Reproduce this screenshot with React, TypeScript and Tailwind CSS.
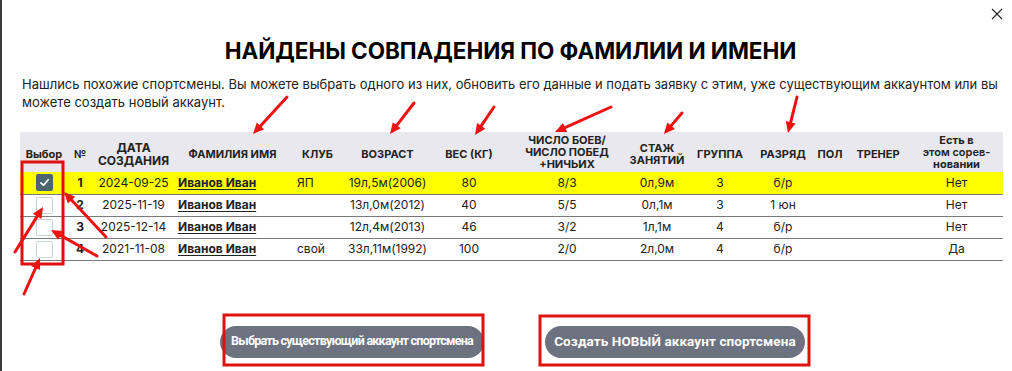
import React from 'react'

const rows = [
  { n: 1, date: '2024-09-25', name: 'Иванов Иван', club: 'ЯП', age: '19л,5м(2006)', weight: '80', fights: '8/3', exp: '0л,9м', group: '3', rank: 'б/р', here: 'Нет', checked: true },
  { n: 2, date: '2025-11-19', name: 'Иванов Иван', club: '', age: '13л,0м(2012)', weight: '40', fights: '5/5', exp: '0л,1м', group: '3', rank: '1 юн', here: 'Нет', checked: false },
  { n: 3, date: '2025-12-14', name: 'Иванов Иван', club: '', age: '12л,4м(2013)', weight: '46', fights: '3/2', exp: '1л,1м', group: '4', rank: 'б/р', here: 'Нет', checked: false },
  { n: 4, date: '2021-11-08', name: 'Иванов Иван', club: 'свой', age: '33л,11м(1992)', weight: '100', fights: '2/0', exp: '2л,0м', group: '4', rank: 'б/р', here: 'Да', checked: false },
]

const widths = [48, 24, 83, 115, 55, 85, 78, 118, 62, 64, 62, 32, 64, 93]

// [x1, y1, x2, y2] — arrow points at x2,y2
const arrows: [number, number, number, number][] = [
  [287, 97, 253, 134],
  [414, 103, 390, 134],
  [494, 107, 475, 135],
  [611, 107, 555, 132],
  [682, 113, 664, 134],
  [797, 97, 788, 133],
  [106, 237, 64, 192],
  [15, 252, 43, 207],
  [97, 256, 51, 230],
  [24, 294, 40, 258],
]

function Arrow({ a }: { a: [number, number, number, number] }) {
  const [x1, y1, x2, y2] = a
  const dx = x2 - x1
  const dy = y2 - y1
  const len = Math.hypot(dx, dy)
  const ux = dx / len
  const uy = dy / len
  const hl = 11
  const hw = 5
  const bx = x2 - ux * hl
  const by = y2 - uy * hl
  const pts = `${x2},${y2} ${bx - uy * hw},${by + ux * hw} ${bx + uy * hw},${by - ux * hw}`
  return (
    <g>
      <line x1={x1} y1={y1} x2={bx} y2={by} stroke="#ee1111" strokeWidth={3} strokeLinecap="round" />
      <polygon points={pts} fill="#ee1111" />
    </g>
  )
}

function Checkbox({ checked }: { checked: boolean }) {
  if (checked) {
    return (
      <div className="mx-auto flex h-[17px] w-[17px] items-center justify-center rounded-[2px] bg-[#4b6670]">
        <svg width="11" height="11" viewBox="0 0 12 12">
          <path d="M2 6.5 L5 9 L10 3" fill="none" stroke="white" strokeWidth="1.8" strokeLinecap="round" strokeLinejoin="round" />
        </svg>
      </div>
    )
  }
  return <div className="mx-auto h-[17px] w-[17px] rounded-[2px] border border-[#c9d5dd] bg-white" />
}

export default function App() {
  return (
    <div className="relative h-[371px] w-[1012px] overflow-hidden border-l-2 border-[#3a3a3a] bg-white text-[#111]" style={{ fontFamily: 'Inter, "Noto Sans", sans-serif' }}>
      <button className="absolute right-[9px] top-[8px] text-[#222]">
        <svg width="12" height="12" viewBox="0 0 12 12">
          <path d="M1 1 L11 11 M11 1 L1 11" stroke="#222" strokeWidth="1.1" />
        </svg>
      </button>

      <h1 className="pl-[7px] pt-[38px] text-center text-[22.5px] font-bold leading-[26px] tracking-[-0.05px] text-black">
        НАЙДЕНЫ СОВПАДЕНИЯ ПО ФАМИЛИИ И ИМЕНИ
      </h1>

      <p className="mt-[11px] pl-[20px] pr-[2px] text-[13px] leading-[18px] text-[#222]">
        Нашлись похожие спортсмены. Вы можете выбрать одного из них, обновить его данные и подать заявку с этим, уже существующим аккаунтом или вы можете создать новый аккаунт.
      </p>

      <table className="ml-[18px] mt-[21px] table-fixed border-collapse" style={{ width: 983 }}>
        <colgroup>
          {widths.map((w, i) => <col key={i} style={{ width: w }} />)}
        </colgroup>
        <thead>
          <tr className="h-[40px] bg-[#e8e8ee] text-[11px] font-bold leading-[12px] text-[#222]">
            <th className="pt-[3px] text-center">Выбор</th>
            <th className="pt-[3px] text-center">№</th>
            <th className="pt-[3px] text-center text-[12px] leading-[13px]">ДАТА<br />СОЗДАНИЯ</th>
            <th className="pt-[3px] text-center">ФАМИЛИЯ ИМЯ</th>
            <th className="pt-[3px] text-center">КЛУБ</th>
            <th className="pt-[3px] text-center">ВОЗРАСТ</th>
            <th className="pt-[3px] text-center">ВЕС (КГ)</th>
            <th className="text-center">ЧИСЛО БОЕВ/<br />ЧИСЛО ПОБЕД<br />+НИЧЬИХ</th>
            <th className="pt-[3px] text-center">СТАЖ<br />ЗАНЯТИЙ</th>
            <th className="pt-[3px] text-center">ГРУППА</th>
            <th className="pt-[3px] text-center">РАЗРЯД</th>
            <th className="pt-[3px] text-center">ПОЛ</th>
            <th className="pt-[3px] text-center">ТРЕНЕР</th>
            <th className="text-center">Есть в<br /><span className="font-semibold">этом сорев-</span><br />новании</th>
          </tr>
        </thead>
        <tbody className="text-[12px] text-[#222]">
          {rows.map(r => (
            <tr key={r.n} className={`h-[22px] border-b border-[#7a7a7a] ${r.checked ? 'bg-[#ffff00]' : 'bg-white'}`}>
              <td className="p-0"><Checkbox checked={r.checked} /></td>
              <td className="text-center font-bold">{r.n}</td>
              <td className="text-center">{r.date}</td>
              <td className="pl-[3px] font-bold underline underline-offset-2">{r.name}</td>
              <td className="pl-[7px]">{r.club}</td>
              <td className="text-center">{r.age}</td>
              <td className="text-center">{r.weight}</td>
              <td className="text-center">{r.fights}</td>
              <td className="text-center">{r.exp}</td>
              <td className="text-center">{r.group}</td>
              <td className="text-center">{r.rank}</td>
              <td className="text-center"></td>
              <td className="text-center"></td>
              <td className="text-center">{r.here}</td>
            </tr>
          ))}
        </tbody>
      </table>

      <div className="mt-[65px] flex justify-center gap-[61px] pl-[11px]" style={{ fontFamily: 'Roboto, "Noto Sans", sans-serif' }}>
        <button className="h-[32px] w-[264px] whitespace-nowrap rounded-full bg-[#6c7280] text-[12.5px] font-bold tracking-[-0.75px] text-white">
          Выбрать существующий аккаунт спортсмена
        </button>
        <button className="h-[32px] w-[260px] whitespace-nowrap rounded-full bg-[#6c7280] text-[13.5px] font-bold tracking-[0.1px] text-white">
          Создать НОВЫЙ аккаунт спортсмена
        </button>
      </div>

      <svg className="pointer-events-none absolute left-[-2px] top-0" width="1012" height="371">
        <rect x="22" y="162" width="41" height="102" fill="none" stroke="#e01010" strokeWidth="3" />
        <rect x="224" y="315" width="259" height="50" fill="none" stroke="#e01010" strokeWidth="3" />
        <rect x="540" y="316" width="269" height="49" fill="none" stroke="#e01010" strokeWidth="3" />
        {arrows.map((a, i) => <Arrow key={i} a={a} />)}
      </svg>
    </div>
  )
}
